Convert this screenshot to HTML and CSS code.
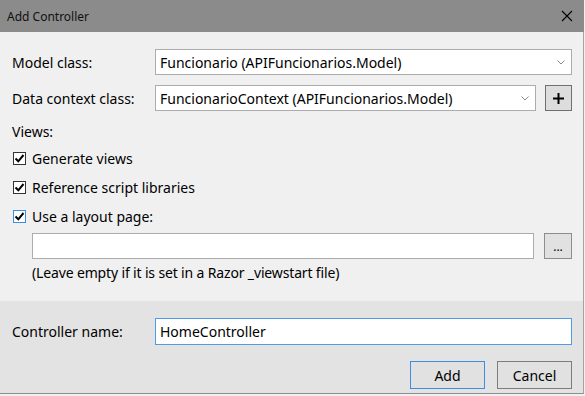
FILE: index.html
```html
<!DOCTYPE html>
<html lang="en">
<head>
    <meta charset="UTF-8">
    <meta name="viewport" content="width=device-width, initial-scale=1.0">
    <title>Add Controller</title>
    <link rel="stylesheet" href="styles.css">
</head>
<body>
    <div class="window">
        <div class="titlebar">
            <span class="title">Add Controller</span>
            <svg class="close" width="12" height="12" viewBox="0 0 12 12">
                <path d="M1 1 L11 11 M11 1 L1 11" stroke="#000" stroke-width="1.1" fill="none"/>
            </svg>
        </div>

        <div class="main">
            <div class="row">
                <label class="label">Model class:</label>
                <div class="combo">
                    <span>Funcionario (APIFuncionarios.Model)</span>
                    <svg class="chevron" width="8" height="5" viewBox="0 0 8 5"><polyline points="0.5,0.5 4,4 7.5,0.5" stroke="#8a8a8a" fill="none"/></svg>
                </div>
            </div>
            <div class="row row-gap">
                <label class="label">Data context class:</label>
                <div class="combo">
                    <span>FuncionarioContext (APIFuncionarios.Model)</span>
                    <svg class="chevron" width="8" height="5" viewBox="0 0 8 5"><polyline points="0.5,0.5 4,4 7.5,0.5" stroke="#8a8a8a" fill="none"/></svg>
                </div>
                <button class="square-btn plus">
                    <svg width="11" height="11" viewBox="0 0 11 11"><path d="M5.5 0 V11 M0 5.5 H11" stroke="#000" stroke-width="2" fill="none"/></svg>
                </button>
            </div>

            <div class="views-label">Views:</div>

            <div class="check-row">
                <span class="checkbox">
                    <svg width="11" height="11" viewBox="0 0 11 11"><polyline points="1.5,5.5 4.3,8.3 9.5,2" stroke="#000" stroke-width="2" fill="none"/></svg>
                </span>
                <span>Generate views</span>
            </div>
            <div class="check-row">
                <span class="checkbox">
                    <svg width="11" height="11" viewBox="0 0 11 11"><polyline points="1.5,5.5 4.3,8.3 9.5,2" stroke="#000" stroke-width="2" fill="none"/></svg>
                </span>
                <span>Reference script libraries</span>
            </div>
            <div class="check-row">
                <span class="checkbox focused">
                    <svg width="11" height="11" viewBox="0 0 11 11"><polyline points="1.5,5.5 4.3,8.3 9.5,2" stroke="#000" stroke-width="2" fill="none"/></svg>
                </span>
                <span>Use a layout page:</span>
            </div>

            <div class="layout-row">
                <div class="textbox"></div>
                <button class="square-btn dots">...</button>
            </div>
            <div class="note">(Leave empty if it is set in a Razor _viewstart file)</div>
        </div>

        <div class="footer">
            <div class="row">
                <label class="label">Controller name:</label>
                <div class="textbox name-box">HomeController</div>
            </div>
            <div class="actions">
                <button class="btn default">Add</button>
                <button class="btn">Cancel</button>
            </div>
        </div>
    </div>
</body>
</html>
```

FILE: styles.css
```css
html {
    background-color: #f0f0f0;
}
body {
    margin: 0;
    font-family: "Noto Sans", "Open Sans", sans-serif;
    font-size: 14px;
    color: #000;
}
.window {
    width: 584px;
}
.titlebar {
    height: 32px;
    background-color: #8b8b8b;
    display: flex;
    align-items: center;
    justify-content: space-between;
    padding: 0 11px 0 7px;
    box-sizing: border-box;
}
.title {
    font-size: 12px;
    color: #111;
}
.close {
    display: block;
}
.main {
    height: 269px;
    box-sizing: border-box;
    padding: 17px 11px 0 12px;
    border-right: 1px solid #a3a3a3;
}
.row {
    display: flex;
    align-items: center;
    height: 26px;
}
.row-gap {
    margin-top: 10px;
}
.label {
    width: 143px;
    flex: none;
}
.combo {
    flex: 1;
    height: 26px;
    box-sizing: border-box;
    background-color: #fff;
    border: 1px solid #acacac;
    display: flex;
    align-items: center;
    justify-content: space-between;
    padding: 0 6px 0 4px;
}
.chevron {
    display: block;
}
.square-btn {
    flex: none;
    width: 27px;
    height: 26px;
    margin-left: 9px;
    padding: 0;
    box-sizing: border-box;
    background-color: #dddddd;
    border: 1px solid #707070;
    font-family: inherit;
    color: #000;
    display: flex;
    align-items: center;
    justify-content: center;
}
.dots {
    font-size: 12px;
    line-height: 12px;
    padding-top: 2px;
    background-color: #e1e1e1;
    border-color: #8d8d8d;
}
.views-label {
    height: 20px;
    line-height: 20px;
    margin-top: 11px;
    margin-bottom: 2px;
}
.check-row {
    height: 29px;
    display: flex;
    align-items: center;
    gap: 6px;
}
.checkbox {
    width: 13px;
    height: 13px;
    box-sizing: border-box;
    margin-left: 1px;
    border: 1px solid #333;
    background-color: #fff;
    display: flex;
    align-items: center;
    justify-content: center;
}
.checkbox svg {
    display: block;
}
.checkbox.focused {
    border-color: #3c8ee4;
}
.layout-row {
    display: flex;
    align-items: center;
    margin: 2px 0 0 20px;
}
.layout-row .square-btn {
    margin-left: 10px;
    width: 28px;
}
.textbox {
    flex: 1;
    height: 26px;
    box-sizing: border-box;
    background-color: #fff;
    border: 1px solid #acacac;
}
.note {
    margin: 4px 0 0 20px;
    height: 20px;
    line-height: 20px;
    letter-spacing: -0.15px;
}
.footer {
    height: 93px;
    box-sizing: border-box;
    background-color: #e3e3e3;
    padding: 17px 11px 0 12px;
    border-right: 1px solid #a3a3a3;
    border-bottom: 1px solid #8f8f8f;
}
.footer .row {
    height: 27px;
}
.name-box {
    height: 27px;
    border-color: #4f9be8;
    padding: 0 4px;
    display: flex;
    align-items: center;
}
.actions {
    display: flex;
    justify-content: flex-end;
    gap: 12px;
    margin-top: 16px;
}
.btn {
    width: 75px;
    height: 28px;
    box-sizing: border-box;
    background-color: #e1e1e1;
    border: 1px solid #7d7d7d;
    font-family: inherit;
    font-size: 14px;
    color: #000;
    padding: 0;
}
.btn.default {
    border-color: #3c8ee4;
}
```
